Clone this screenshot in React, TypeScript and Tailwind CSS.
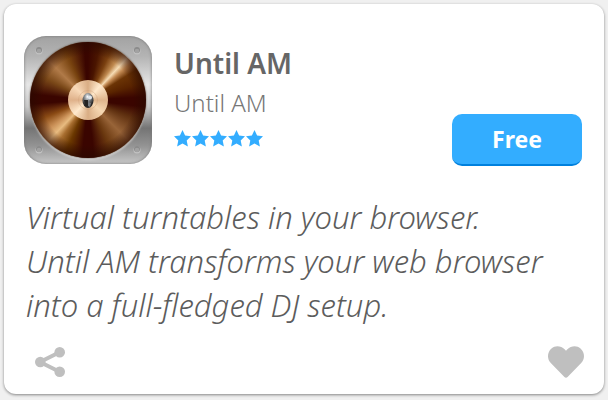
import { FaHeart } from 'react-icons/fa'

const app = {
  name: 'Until AM',
  author: 'Until AM',
  rating: 5,
  price: 'Free',
  description: [
    'Virtual turntables in your browser.',
    'Until AM transforms your web browser',
    'into a full-fledged DJ setup.',
  ],
}

function AppIcon() {
  return (
    <div className="relative h-32 w-32 shrink-0 overflow-hidden rounded-[22px] bg-[linear-gradient(180deg,#a2a2a2_0%,#b4b4b4_16%,#e6e6e6_38%,#cacaca_55%,#747474_72%,#949494_86%,#c8c8c8_100%)] shadow-[inset_0_0_3px_#777]">
      {/* Record */}
      <div className="absolute top-1.5 left-1.5 h-[116px] w-[116px] rounded-full bg-[conic-gradient(#3a0500_0deg,#4a1500_12deg,#7a4010_25deg,#c08a50_36deg,#f6dcb4_43deg,#c48b54_49deg,#6b3405_58deg,#5a2400_72deg,#3a0500_87deg,#3a0500_97deg,#5f3010_112deg,#986438_135deg,#6a380f_155deg,#3a0500_174deg,#3a0500_186deg,#6b3800_203deg,#a86e30_215deg,#e8bb80_224deg,#c98f56_234deg,#8a4a14_248deg,#3a0500_266deg,#3a0500_276deg,#7a4818_297deg,#b07a48_315deg,#78430f_335deg,#3a0500_356deg,#3a0500_360deg)] shadow-[0_0_2px_#4a3a2c,0_2px_2px_#ddd]" />
      <svg viewBox="0 0 128 128" className="absolute inset-0 h-full w-full" aria-hidden="true">
        <defs>
          <radialGradient id="edge">
            <stop offset="0.78" stopColor="#2a0900" stopOpacity="0" />
            <stop offset="1" stopColor="#2a0900" stopOpacity="0.7" />
          </radialGradient>
          <radialGradient id="pin" cx="0.45" cy="0.25" r="0.75">
            <stop offset="0" stopColor="#ffffff" />
            <stop offset="0.3" stopColor="#949a9e" />
            <stop offset="0.8" stopColor="#2b2a29" />
          </radialGradient>
        </defs>
        <circle cx="64" cy="64" r="58" fill="url(#edge)" />
        {[[15, 14], [113, 14], [15, 113], [113, 113]].map(([x, y]) => (
          <g key={`${x}-${y}`}>
            <circle cx={x} cy={y + 1} r="3.5" fill="#c2c2c2" />
            <circle cx={x} cy={y} r="3" fill="#8a8a8a" />
            <circle cx={x} cy={y + 1} r="2.3" fill="#a2a2a2" />
          </g>
        ))}
      </svg>
      {/* Label and spindle */}
      <div className="absolute top-11 left-11 h-10 w-10 rounded-full bg-[conic-gradient(#d9ad84,#ffe9cc_40deg,#dfb58c_90deg,#f6d8b2_130deg,#d9ad84_180deg,#ffe9cc_225deg,#dfb18a_270deg,#f8d9b8_315deg,#d9ad84)]" />
      <svg viewBox="0 0 128 128" className="absolute inset-0 h-full w-full" aria-hidden="true">
        <circle cx="64" cy="64" r="9.5" fill="none" stroke="#c99a73" strokeOpacity="0.35" />
        <ellipse cx="64" cy="64.5" rx="5.5" ry="7.5" fill="url(#pin)" />
        <path d="M60 64h4v6h-3z" fill="#242322" />
        <path d="M64 66l3 1-1 4-2-1z" fill="#777c80" />
        <circle cx="66" cy="61.5" r="2" fill="#dfe5ea" />
      </svg>
    </div>
  )
}

function Stars({ count }: { count: number }) {
  return (
    <div className="flex gap-px" role="img" aria-label={`${count} stars`}>
      {Array.from({ length: count }, (_, i) => (
        <svg key={i} viewBox="0 0 17 17" className="h-[17px] w-[17px]" fill="#33adff">
          <path d="M8.5 0l2.6 5.6 5.9.6-4.3 4.2 1.2 6-5.4-2.9-5.4 2.9 1.2-6L0 6.2l5.9-.6z" />
        </svg>
      ))}
    </div>
  )
}

function ShareIcon() {
  return (
    <svg viewBox="0 0 30 30" className="h-[30px] w-[30px]" fill="#bfbfbf" aria-hidden="true">
      <path d="M25 5L5 15l20 10" fill="none" stroke="#bfbfbf" strokeWidth="4" />
      <circle cx="24.7" cy="5.3" r="5.3" />
      <circle cx="5.3" cy="15" r="5.3" />
      <circle cx="24.7" cy="24.7" r="5.3" />
    </svg>
  )
}

export default function App() {
  return (
    <main className="min-h-screen bg-[#f0f0f0] p-1 pb-1.5 font-['Noto_Sans',sans-serif] text-[#666]">
      <article className="rounded-xl bg-white px-5 pt-8 pb-3.5 shadow-[0_1px_3px_rgba(0,0,0,0.45)]">
        <header className="flex items-start">
          <AppIcon />
          <div className="ml-[22px] flex-1 pt-[7px]">
            <h1 className="text-[28px] leading-10 font-semibold">{app.name}</h1>
            <p className="text-2xl leading-10 font-light text-[#777]">{app.author}</p>
            <div className="mt-[7px]">
              <Stars count={app.rating} />
            </div>
          </div>
          <button
            type="button"
            className="mt-[78px] mr-0.5 h-[52px] w-[130px] rounded-[10px] border-b-2 border-[#0080dd] bg-[#33adff] text-[23px] font-bold text-white"
          >
            {app.price}
          </button>
        </header>
        <p className="mt-[29px] ml-0.5 text-[31px] leading-11 font-light text-[#5c5c5c] italic">
          {app.description.map((line) => (
            <span key={line} className="block whitespace-nowrap">
              {line}
            </span>
          ))}
        </p>
        <footer className="mt-[17px] flex items-center justify-between pl-[11px]">
          <button type="button" aria-label="Share">
            <ShareIcon />
          </button>
          <button type="button" aria-label="Favourite">
            <FaHeart className="h-9 w-9 text-[#bfbfbf]" />
          </button>
        </footer>
      </article>
    </main>
  )
}
